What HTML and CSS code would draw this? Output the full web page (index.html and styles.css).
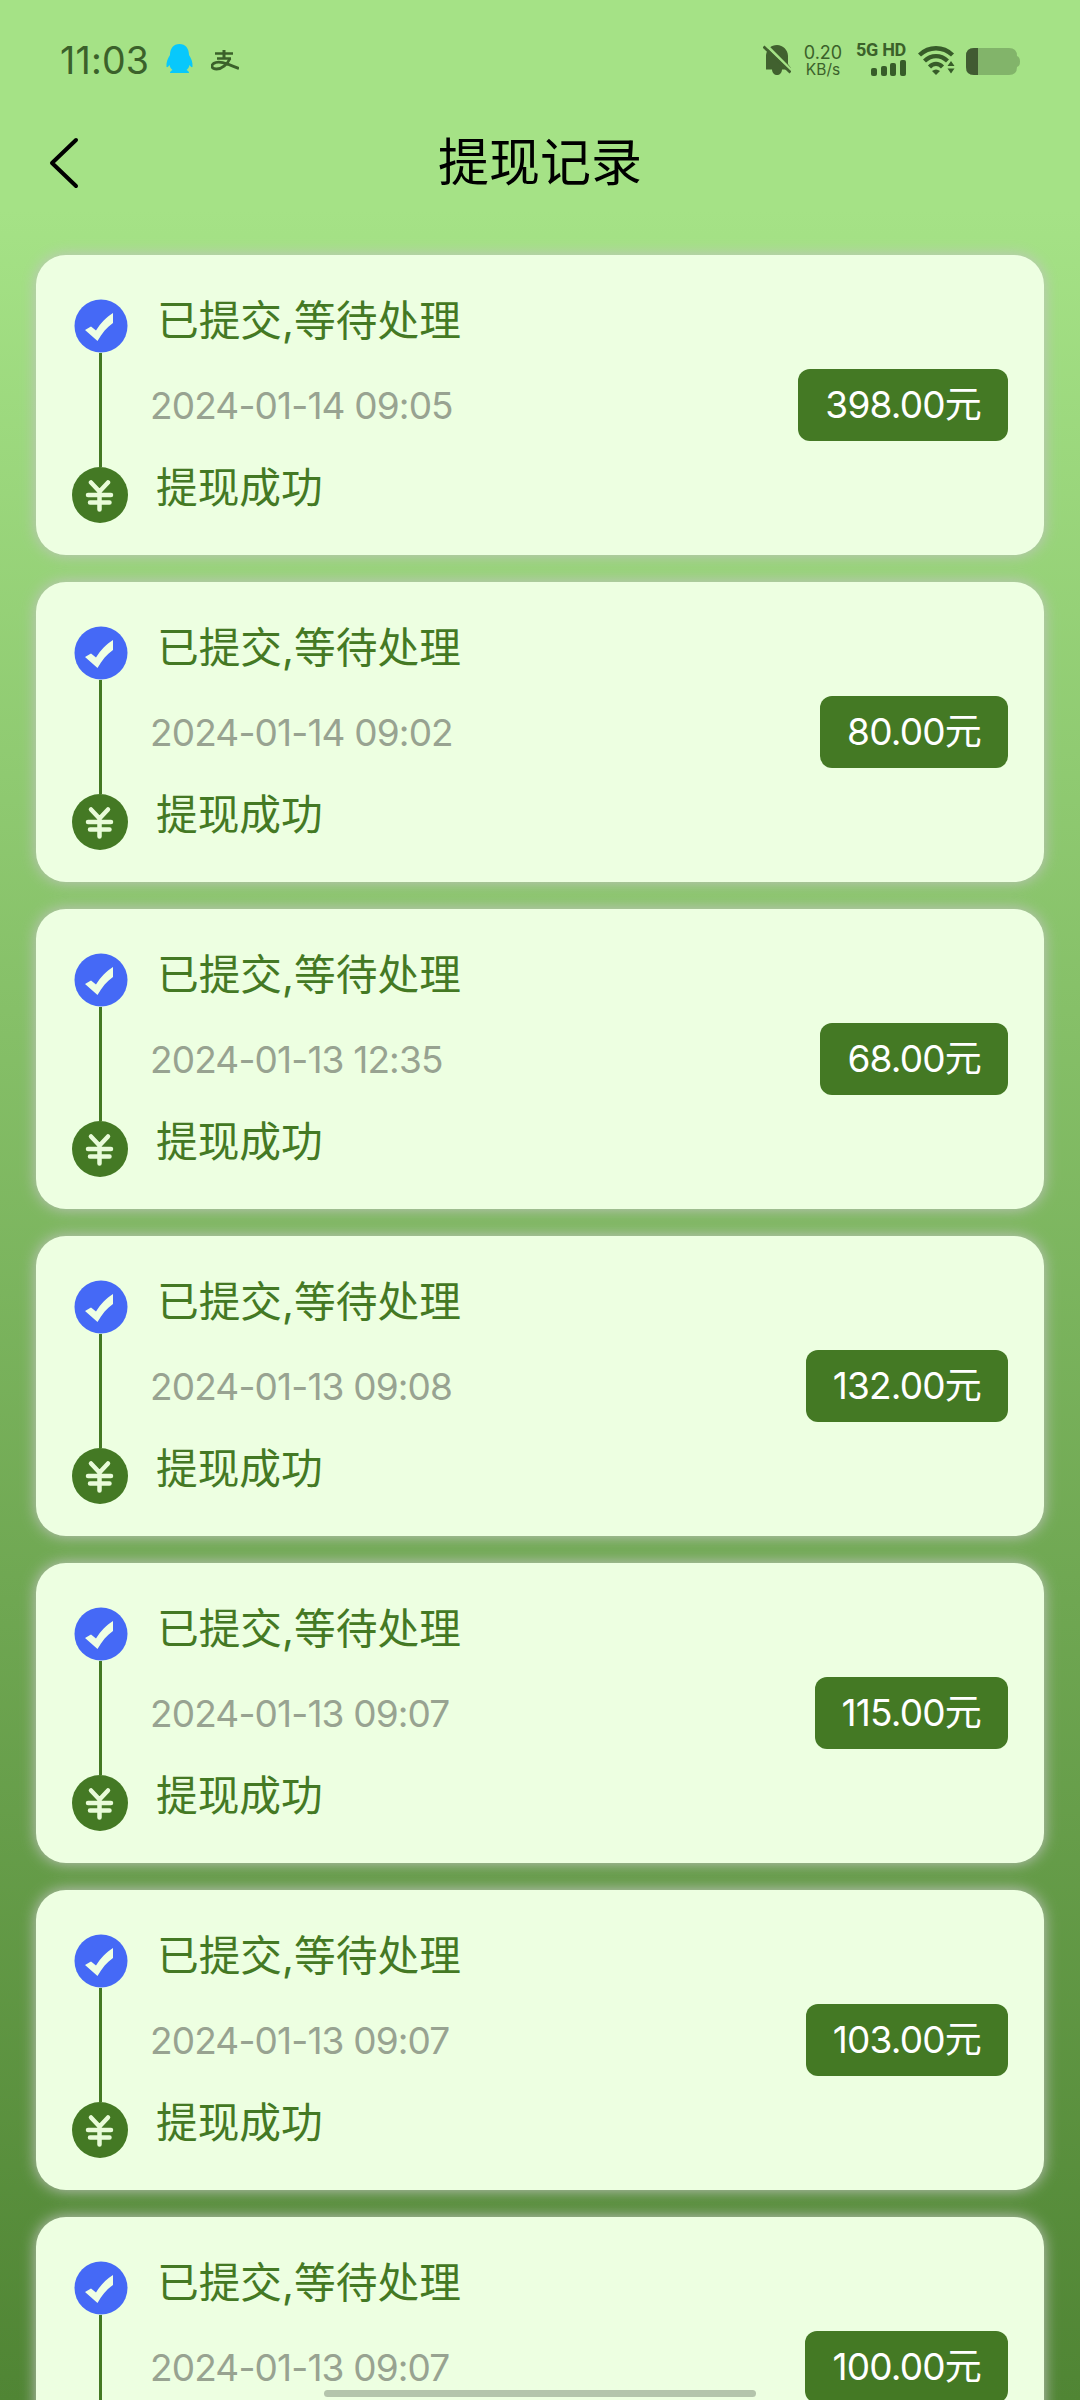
FILE: index.html
```html
<!DOCTYPE html>
<html lang="zh-CN">
<head>
<meta charset="utf-8">
<title>提现记录</title>
<link rel="stylesheet" href="styles.css">
</head>
<body>
<svg class="defs" aria-hidden="true">
  <symbol id="check" viewBox="0 0 54 54">
    <circle cx="27" cy="27" r="26.5" fill="#4569f6"/>
    <path d="M11 31l6-3.500 5 4c5-8 10-13 17-17.500v10c-6 4-11 10-15.500 18z" fill="#efffe3"/>
  </symbol>
  <symbol id="yen" viewBox="0 0 56 56">
    <circle cx="28" cy="28" r="28" fill="#447924"/>
    <path d="M19 15.500l8.500 9 8.500-9M16 28h23M18 35.500h19.500M27.500 25v17.500" fill="none" stroke="#e8fbd8" stroke-width="4.500" stroke-linecap="round"/>
  </symbol>
</svg>
<header class="status">
  <div class="status-left">
    <span class="clock">11:03</span>
    <svg class="qq" viewBox="0 0 27 30"><path d="M13.500 0C7.500 0 4 4.500 4 11 2 14 0 18 .5 23c1 .5 2-.5 3-2 .5 2 1.500 4 3 5-2 1-2.500 2-2.500 3h19c0-1-.5-2-2.500-3 1.500-1 2.500-3 3-5 1 1.500 2 2.500 3 2 .5-5-1.500-9-3.500-12C23 4.500 19.500 0 13.500 0z" fill="#08c8fb"/></svg>
    <svg class="alipay" viewBox="0 0 28 22"><g fill="none" stroke="#3b612a"><path d="M4 3.500h18M6 8.500h14" stroke-width="2.400"/><path d="M13 0v8" stroke-width="3"/><path d="M19 8.500C16.500 14 11 19 5.500 19 1 19-.5 16 2.500 13.500c5-3.500 12-.5 25.500 5" stroke-width="2.800"/></g></svg>
  </div>
  <div class="status-right">
    <svg class="bell" viewBox="0 0 28 32"><path d="M3 25.500V11C4 5 8 1 14 1s11 5 11 11v8l3 4v1.500z" fill="#41612f"/><path d="M9 25h10c0 8-10 8-10 0z" fill="#41612f"/><path d="M2 0l27 27" stroke="#a5e286" stroke-width="3"/><path d="M.5 2.500l27 26" stroke="#41612f" stroke-width="2.800"/></svg>
    <div class="speed"><span>0.20</span><small>KB/s</small></div>
    <div class="mobile"><b>5G HD</b>
      <svg class="bars" viewBox="0 0 35 16"><g fill="#375c29"><rect y="8" width="6" height="8" rx="2"/><rect x="10" y="6" width="6" height="10" rx="2"/><rect x="19" y="3" width="6" height="13" rx="2"/><rect x="29" width="6" height="16" rx="2"/></g></svg>
    </div>
    <svg class="wifi" viewBox="0 0 38 29"><g fill="none" stroke="#375c29" stroke-width="4.400"><path d="M1.500 9C11 0 25 0 34.500 9"/><path d="M6.500 15c7-6.500 16-6.500 23 0"/><path d="M11.500 21c4-4 9-4 13 0"/></g><path d="M14 25q4-3 8 0l-4 4zM29.500 20l3.500-5 3.500 5zM29.500 22.500h7l-3.500 5z" fill="#375c29"/></svg>
    <svg class="battery" viewBox="0 0 54 27"><path d="M8 0h35q8 0 8 8 3 1 3 5.500T51 19q0 8-8 8H8q-8 0-8-8V8q0-8 8-8z" fill="#82b46a"/><path d="M12 0H8Q0 0 0 8v11q0 8 8 8h4z" fill="#415b32"/></svg>
  </div>
</header>
<nav class="navbar">
  <svg class="back" viewBox="0 0 30 52"><path d="M27 3L3 26l24 23" fill="none" stroke="#000" stroke-width="4" stroke-linecap="round" stroke-linejoin="round"/></svg>
  <h1>提现记录</h1>
</nav>
<main class="list" id="list"></main>
<div class="home-indicator"></div>
<script src="app.js"></script>
</body>
</html>
```
FILE: styles.css
```css
* { box-sizing: border-box; }
html { height: 2400px; overflow: hidden; }
body {
  margin: 0;
  width: 1080px;
  height: 2400px;
  overflow: hidden;
  position: relative;
  font-family: Inter, "Noto Sans CJK SC", sans-serif;
  background: linear-gradient(#a5e286 0, #a5e286 210px, #508534 2400px);
}
.defs { position: absolute; width: 0; height: 0; }
svg { display: block; }
.status {
  height: 120px;
  padding: 0 60px;
  display: flex;
  justify-content: space-between;
  color: #3b612a;
}
.status-left, .status-right { display: flex; align-items: flex-start; }
.clock { font-size: 37.500px; line-height: 40px; margin-top: 41px; width: 106px; white-space: nowrap; letter-spacing: 0.2px; }
.qq { width: 27px; height: 30px; margin-top: 44px; }
.alipay { width: 28px; height: 22px; margin: 50px 0 0 18px; }
.bell { width: 28px; height: 32px; margin-top: 44px; }
.speed { width: 40px; margin: 43px 0 0 12px; display: flex; flex-direction: column; align-items: center; }
.speed span { font-size: 18px; line-height: 19px; }
.speed small { font-size: 15.500px; line-height: 16px; }
.mobile { width: 49px; margin: 41px 0 0 14px; display: flex; flex-direction: column; align-items: flex-end; }
.mobile b { font: 700 18px/18px Roboto, sans-serif; letter-spacing: -0.3px; white-space: nowrap; }
.bars { width: 35px; height: 16px; margin-top: 1px; }
.wifi { width: 38px; height: 29px; margin: 46px 0 0 12px; }
.battery { width: 54px; height: 27px; margin: 48px 0 0 10px; }
.navbar {
  height: 135px;
  padding: 17px 49px 0;
  display: grid;
  grid-template-columns: 30px 1fr 30px;
}
.back { width: 30px; height: 52px; }
.navbar h1 { margin: 0; text-align: center; font-size: 51px; font-weight: 400; line-height: 52px; }
.list { padding: 0 36px; display: grid; gap: 27px; }
.card {
  height: 300px;
  padding: 0 36px 0 35px;
  border-radius: 30px;
  background: #edffe1;
  box-shadow: 0 0 15px #c4c4c4;
  display: grid;
  grid-template-columns: 58px 1fr auto;
  align-items: center;
}
.track { height: 300px; padding: 44px 0 32px; display: flex; flex-direction: column; align-items: center; }
.check { width: 54px; height: 54px; flex: none; margin-left: 2px; }
.track .line { width: 3px; flex: 1; background: #447924; }
.yen { width: 56px; height: 56px; flex: none; }
.info { height: 300px; padding: 42px 0 0 21px; color: #447924; font-size: 41.700px; }
.info p { margin: 0; white-space: nowrap; }
.state { line-height: 48px; padding-left: 7px; }
.date { font-size: 37px; font-weight: 400; line-height: 48px; padding-top: 37px; color: #98a391; letter-spacing: -0.85px; }
.done { line-height: 48px; padding: 34px 0 0 6px; }
.amount {
  height: 72px;
  padding: 0 27px;
  border-radius: 12px;
  background: #447924;
  color: #fff;
  font-size: 37px;
  letter-spacing: -0.800px;
  line-height: 72px;
  white-space: nowrap;
}
.home-indicator {
  position: absolute;
  left: 324px;
  top: 2390px;
  width: 432px;
  height: 7px;
  border-radius: 4px;
  background: #b4c4ac;
}
```
FILE: app.js
```js
const records = [
  ["2024-01-14 09:05", "398.00"],
  ["2024-01-14 09:02", "80.00"],
  ["2024-01-13 12:35", "68.00"],
  ["2024-01-13 09:08", "132.00"],
  ["2024-01-13 09:07", "115.00"],
  ["2024-01-13 09:07", "103.00"],
  ["2024-01-13 09:07", "100.00"]
];

document.getElementById("list").innerHTML = records.map(([date, amount]) => `
  <article class="card">
    <div class="track">
      <svg class="check"><use href="#check"/></svg>
      <span class="line"></span>
      <svg class="yen"><use href="#yen"/></svg>
    </div>
    <div class="info">
      <p class="state">已提交,等待处理</p>
      <p class="date">${date}</p>
      <p class="done">提现成功</p>
    </div>
    <div class="amount">${amount}元</div>
  </article>`).join("");
```
